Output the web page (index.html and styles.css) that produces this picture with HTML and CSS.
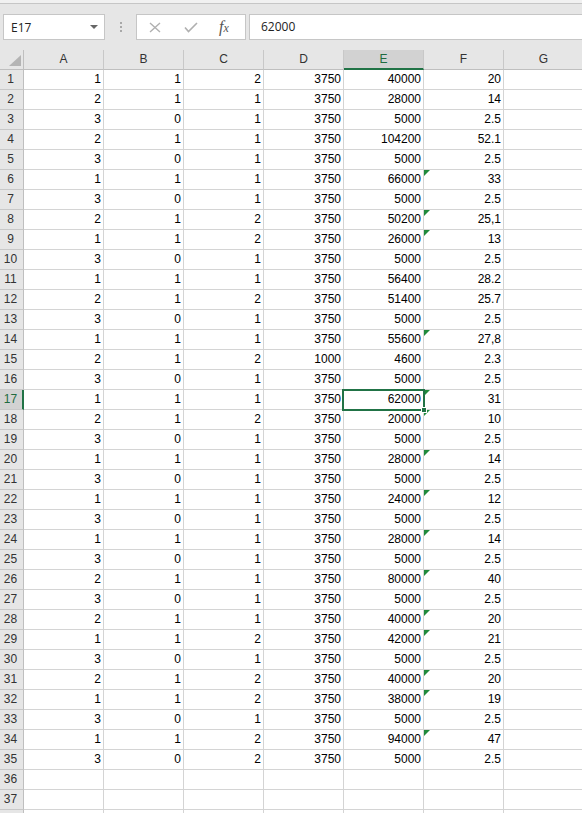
FILE: index.html
```html
<!DOCTYPE html>
<html>
<head>
<meta charset="utf-8">
<link rel="stylesheet" href="styles.css">
</head>
<body>
<div class="topstrip"></div>
<div class="toolbar">
  <div class="namebox"><span class="nb-text">E17</span><span class="nb-arrow"></span></div>
  <div class="dots"><span></span><span></span><span></span></div>
  <div class="btnbox">
    <svg class="ico-x" width="12" height="11" viewBox="0 0 12 11"><path d="M1 1 L11 10 M11 1 L1 10" stroke="#b0b0b0" stroke-width="1.4" fill="none"/></svg>
    <svg class="ico-check" width="14" height="11" viewBox="0 0 14 11"><path d="M1 5.5 L4.5 9.5 L13 1" stroke="#b0b0b0" stroke-width="1.6" fill="none"/></svg>
    <span class="fx">f<span class="fx-x">x</span></span>
  </div>
  <div class="formula">62000</div>
</div>
<div class="sheet">
  <div class="corner"><svg width="12" height="11" viewBox="0 0 12 11"><polygon points="12,0 12,11 0,11" fill="#b4b4b4"/></svg></div>
  <div class="ch">A</div><div class="ch">B</div><div class="ch">C</div><div class="ch">D</div><div class="ch sel">E</div><div class="ch">F</div><div class="ch">G</div>

  <div class="rh">1</div><div class="c">1</div><div class="c">1</div><div class="c">2</div><div class="c">3750</div><div class="c">40000</div><div class="c">20</div><div class="c"></div>
  <div class="rh">2</div><div class="c">2</div><div class="c">1</div><div class="c">1</div><div class="c">3750</div><div class="c">28000</div><div class="c">14</div><div class="c"></div>
  <div class="rh">3</div><div class="c">3</div><div class="c">0</div><div class="c">1</div><div class="c">3750</div><div class="c">5000</div><div class="c">2.5</div><div class="c"></div>
  <div class="rh">4</div><div class="c">2</div><div class="c">1</div><div class="c">1</div><div class="c">3750</div><div class="c">104200</div><div class="c">52.1</div><div class="c"></div>
  <div class="rh">5</div><div class="c">3</div><div class="c">0</div><div class="c">1</div><div class="c">3750</div><div class="c">5000</div><div class="c">2.5</div><div class="c"></div>
  <div class="rh">6</div><div class="c">1</div><div class="c">1</div><div class="c">1</div><div class="c">3750</div><div class="c">66000</div><div class="c flag">33</div><div class="c"></div>
  <div class="rh">7</div><div class="c">3</div><div class="c">0</div><div class="c">1</div><div class="c">3750</div><div class="c">5000</div><div class="c">2.5</div><div class="c"></div>
  <div class="rh">8</div><div class="c">2</div><div class="c">1</div><div class="c">2</div><div class="c">3750</div><div class="c">50200</div><div class="c flag">25,1</div><div class="c"></div>
  <div class="rh">9</div><div class="c">1</div><div class="c">1</div><div class="c">2</div><div class="c">3750</div><div class="c">26000</div><div class="c flag">13</div><div class="c"></div>
  <div class="rh">10</div><div class="c">3</div><div class="c">0</div><div class="c">1</div><div class="c">3750</div><div class="c">5000</div><div class="c">2.5</div><div class="c"></div>
  <div class="rh">11</div><div class="c">1</div><div class="c">1</div><div class="c">1</div><div class="c">3750</div><div class="c">56400</div><div class="c">28.2</div><div class="c"></div>
  <div class="rh">12</div><div class="c">2</div><div class="c">1</div><div class="c">2</div><div class="c">3750</div><div class="c">51400</div><div class="c">25.7</div><div class="c"></div>
  <div class="rh">13</div><div class="c">3</div><div class="c">0</div><div class="c">1</div><div class="c">3750</div><div class="c">5000</div><div class="c">2.5</div><div class="c"></div>
  <div class="rh">14</div><div class="c">1</div><div class="c">1</div><div class="c">1</div><div class="c">3750</div><div class="c">55600</div><div class="c flag">27,8</div><div class="c"></div>
  <div class="rh">15</div><div class="c">2</div><div class="c">1</div><div class="c">2</div><div class="c">1000</div><div class="c">4600</div><div class="c">2.3</div><div class="c"></div>
  <div class="rh">16</div><div class="c">3</div><div class="c">0</div><div class="c">1</div><div class="c">3750</div><div class="c">5000</div><div class="c">2.5</div><div class="c"></div>
  <div class="rh sel">17</div><div class="c">1</div><div class="c">1</div><div class="c">1</div><div class="c">3750</div><div class="c active">62000<span class="selbox"></span><span class="handle"></span></div><div class="c flag">31</div><div class="c"></div>
  <div class="rh">18</div><div class="c">2</div><div class="c">1</div><div class="c">2</div><div class="c">3750</div><div class="c">20000</div><div class="c flag">10</div><div class="c"></div>
  <div class="rh">19</div><div class="c">3</div><div class="c">0</div><div class="c">1</div><div class="c">3750</div><div class="c">5000</div><div class="c">2.5</div><div class="c"></div>
  <div class="rh">20</div><div class="c">1</div><div class="c">1</div><div class="c">1</div><div class="c">3750</div><div class="c">28000</div><div class="c flag">14</div><div class="c"></div>
  <div class="rh">21</div><div class="c">3</div><div class="c">0</div><div class="c">1</div><div class="c">3750</div><div class="c">5000</div><div class="c">2.5</div><div class="c"></div>
  <div class="rh">22</div><div class="c">1</div><div class="c">1</div><div class="c">1</div><div class="c">3750</div><div class="c">24000</div><div class="c flag">12</div><div class="c"></div>
  <div class="rh">23</div><div class="c">3</div><div class="c">0</div><div class="c">1</div><div class="c">3750</div><div class="c">5000</div><div class="c">2.5</div><div class="c"></div>
  <div class="rh">24</div><div class="c">1</div><div class="c">1</div><div class="c">1</div><div class="c">3750</div><div class="c">28000</div><div class="c flag">14</div><div class="c"></div>
  <div class="rh">25</div><div class="c">3</div><div class="c">0</div><div class="c">1</div><div class="c">3750</div><div class="c">5000</div><div class="c">2.5</div><div class="c"></div>
  <div class="rh">26</div><div class="c">2</div><div class="c">1</div><div class="c">1</div><div class="c">3750</div><div class="c">80000</div><div class="c flag">40</div><div class="c"></div>
  <div class="rh">27</div><div class="c">3</div><div class="c">0</div><div class="c">1</div><div class="c">3750</div><div class="c">5000</div><div class="c">2.5</div><div class="c"></div>
  <div class="rh">28</div><div class="c">2</div><div class="c">1</div><div class="c">1</div><div class="c">3750</div><div class="c">40000</div><div class="c flag">20</div><div class="c"></div>
  <div class="rh">29</div><div class="c">1</div><div class="c">1</div><div class="c">2</div><div class="c">3750</div><div class="c">42000</div><div class="c flag">21</div><div class="c"></div>
  <div class="rh">30</div><div class="c">3</div><div class="c">0</div><div class="c">1</div><div class="c">3750</div><div class="c">5000</div><div class="c">2.5</div><div class="c"></div>
  <div class="rh">31</div><div class="c">2</div><div class="c">1</div><div class="c">2</div><div class="c">3750</div><div class="c">40000</div><div class="c flag">20</div><div class="c"></div>
  <div class="rh">32</div><div class="c">1</div><div class="c">1</div><div class="c">2</div><div class="c">3750</div><div class="c">38000</div><div class="c flag">19</div><div class="c"></div>
  <div class="rh">33</div><div class="c">3</div><div class="c">0</div><div class="c">1</div><div class="c">3750</div><div class="c">5000</div><div class="c">2.5</div><div class="c"></div>
  <div class="rh">34</div><div class="c">1</div><div class="c">1</div><div class="c">2</div><div class="c">3750</div><div class="c">94000</div><div class="c flag">47</div><div class="c"></div>
  <div class="rh">35</div><div class="c">3</div><div class="c">0</div><div class="c">2</div><div class="c">3750</div><div class="c">5000</div><div class="c">2.5</div><div class="c"></div>
  <div class="rh">36</div><div class="c"></div><div class="c"></div><div class="c"></div><div class="c"></div><div class="c"></div><div class="c"></div><div class="c"></div>
  <div class="rh">37</div><div class="c"></div><div class="c"></div><div class="c"></div><div class="c"></div><div class="c"></div><div class="c"></div><div class="c"></div>
  <div class="rh"></div><div class="c"></div><div class="c"></div><div class="c"></div><div class="c"></div><div class="c"></div><div class="c"></div><div class="c"></div>
</div>
</body>
</html>
```
FILE: styles.css
```css
* { box-sizing: border-box; }
html, body { margin: 0; padding: 0; }
body {
  width: 582px;
  height: 813px;
  overflow: hidden;
  background: #ffffff;
  font-family: "Liberation Sans", Arial, sans-serif;
}
.topstrip {
  height: 4px;
  background: #f1f1f1;
  border-bottom: 1px solid #c6c6c6;
}
.toolbar {
  height: 46px;
  background: #e6e6e6;
  display: flex;
  align-items: flex-start;
  padding-top: 10px;
  padding-left: 3px;
}
.namebox {
  width: 102px;
  height: 26px;
  background: #fff;
  border: 1px solid #c6c6c6;
  display: flex;
  align-items: center;
  justify-content: space-between;
  padding: 0 6px 0 7px;
}
.nb-text {
  font-family: "Open Sans", "Liberation Sans", sans-serif;
  font-size: 12px;
  color: #222;
}
.nb-arrow {
  width: 0;
  height: 0;
  border-left: 4px solid transparent;
  border-right: 4px solid transparent;
  border-top: 4px solid #666;
}
.dots {
  width: 31px;
  height: 26px;
  display: flex;
  flex-direction: column;
  align-items: center;
  justify-content: center;
  gap: 2px;
}
.dots span {
  width: 2px;
  height: 2px;
  background: #a8a8a8;
}
.btnbox {
  width: 110px;
  height: 26px;
  background: #fff;
  border: 1px solid #c6c6c6;
  display: flex;
  align-items: center;
  padding-left: 12px;
}
.ico-x { margin-right: 23px; }
.ico-check { margin-right: 21px; }
.fx {
  font-family: "Liberation Serif", "DejaVu Serif", serif;
  font-style: italic;
  font-size: 16px;
  color: #555;
  line-height: 1;
}
.fx-x { font-size: 12px; }
.formula {
  flex: 1;
  height: 26px;
  margin-left: 3px;
  margin-right: -4px;
  background: #fff;
  border: 1px solid #c6c6c6;
  padding-left: 11px;
  font-family: "Open Sans", "Liberation Sans", sans-serif;
  font-size: 12px;
  color: #222;
  line-height: 24px;
}
.sheet {
  display: grid;
  grid-template-columns: 24px repeat(7, 80px);
  grid-auto-rows: 20px;
  width: 584px;
}
.corner {
  background: #e6e6e6;
  border-right: 1px solid #bfbfbf;
  border-bottom: 1px solid #bfbfbf;
  display: flex;
  align-items: flex-end;
  justify-content: flex-end;
  padding: 0 2px 3px 0;
}
.corner svg { display: block; }
.ch {
  background: #e6e6e6;
  border-right: 1px solid #c8c8c8;
  border-bottom: 1px solid #bfbfbf;
  text-align: center;
  font-size: 12px;
  color: #333;
  line-height: 19px;
}
.ch.sel {
  background: #d2d2d2;
  border-bottom: 2px solid #217346;
  color: #1f6b40;
}
.rh {
  background: #e6e6e6;
  border-right: 1px solid #bfbfbf;
  border-bottom: 1px solid #c8c8c8;
  text-align: center;
  padding-right: 2px;
  font-size: 12px;
  color: #333;
  line-height: 19px;
}
.rh.sel {
  background: #d2d2d2;
  border-right: 2px solid #217346;
  color: #1f6b40;
  padding-right: 1px;
}
.c {
  position: relative;
  background: #fff;
  border-right: 1px solid #d4d4d4;
  border-bottom: 1px solid #d4d4d4;
  text-align: right;
  padding-right: 2px;
  font-size: 12px;
  color: #000;
  line-height: 19px;
}
.flag::before {
  content: "";
  position: absolute;
  left: 0;
  top: 0;
  width: 0;
  height: 0;
  border-top: 6px solid #1f8a3c;
  border-right: 6px solid transparent;
}
.selbox {
  position: absolute;
  left: -2px;
  top: -1px;
  width: 83px;
  height: 22px;
  border: 2px solid #217346;
  z-index: 2;
}
.handle {
  position: absolute;
  left: 77px;
  top: 17px;
  width: 6px;
  height: 6px;
  background: #217346;
  border: 1px solid #fff;
  z-index: 3;
}
```
